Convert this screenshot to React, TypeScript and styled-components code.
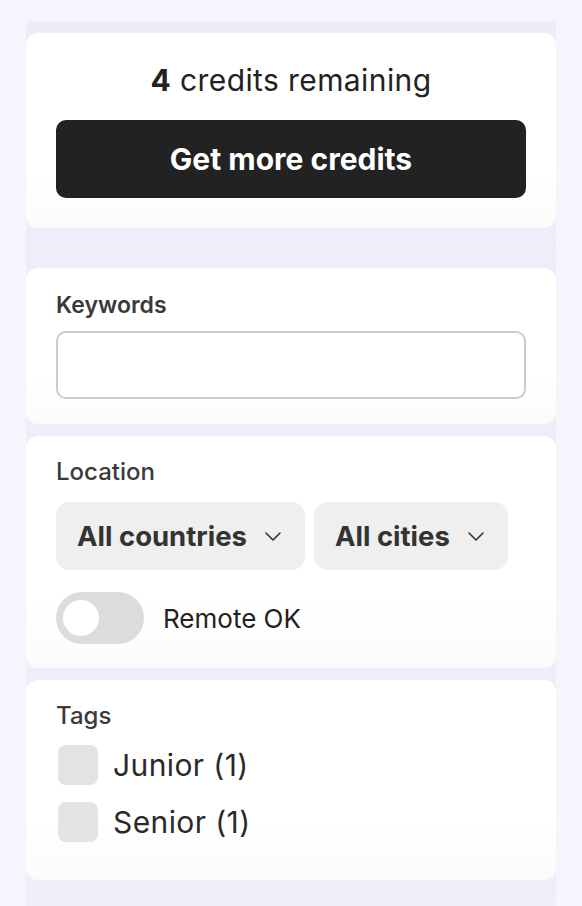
import React from 'react';
import styled, { createGlobalStyle } from 'styled-components';

const GlobalStyle = createGlobalStyle`
  html, body {
    margin: 0;
    padding: 0;
    background: #f5f5fe;
  }
  body {
    font-family: Inter, "Noto Sans", sans-serif;
    color: #222;
  }
`;

const Page = styled.div`
  width: 582px;
  height: 906px;
  padding-top: 21px;
  box-sizing: border-box;
  overflow: hidden;
`;

const Column = styled.div`
  margin: 0 26px;
  padding-top: 12px;
  min-height: 900px;
  background: linear-gradient(180deg, #ededf7 0%, #efeff9 100%);
  display: flex;
  flex-direction: column;
`;

const Card = styled.section<{ $gap?: number; $top?: number; $bottom?: number }>`
  background: linear-gradient(180deg, #ffffff 70%, #fbfbfb 100%);
  border-radius: 12px;
  padding: ${p => p.$top ?? 22}px 30px ${p => p.$bottom ?? 24}px;
  box-sizing: border-box;
  margin-bottom: ${p => p.$gap ?? 12}px;
  display: flex;
  flex-direction: column;
`;

const Credits = styled.div`
  text-align: center;
  font-size: 30px;
  letter-spacing: 0.4px;
  line-height: 34px;
  color: #222;
  margin-bottom: 23px;
  b {
    font-weight: 700;
  }
`;

const PrimaryButton = styled.button`
  height: 78px;
  border: none;
  border-radius: 10px;
  background: #222222;
  color: #fff;
  font-family: Inter, sans-serif;
  font-size: 30px;
  font-weight: 700;
  cursor: pointer;
`;

const Label = styled.div<{ $weight?: number; $space?: number }>`
  font-size: ${p => (p.$weight === 600 ? 23 : 24)}px;
  line-height: 28px;
  font-weight: ${p => p.$weight ?? 500};
  color: #3a3a3a;
  margin-bottom: ${p => p.$space ?? 12}px;
`;

const TextInput = styled.input`
  height: 68px;
  border: 2px solid #cccccc;
  border-radius: 10px;
  box-sizing: border-box;
  font-size: 22px;
  padding: 0 14px;
  outline: none;
`;

const SelectRow = styled.div`
  display: flex;
  gap: 9px;
  margin-bottom: 22px;
`;

const Select = styled.div`
  height: 68px;
  display: flex;
  align-items: center;
  gap: 18px;
  padding: 0 24px 0 21px;
  border-radius: 14px;
  background: #efefef;
  font-size: 27.5px;
  font-weight: 700;
  color: #333;
`;

const ToggleRow = styled.div`
  display: flex;
  align-items: center;
  gap: 19px;
  font-size: 26px;
  color: #222;
`;

const Toggle = styled.div`
  width: 88px;
  height: 52px;
  border-radius: 26px;
  background: #dcdcdc;
  display: flex;
  align-items: center;
  padding-left: 7px;
  box-sizing: border-box;
`;

const Knob = styled.div`
  width: 36px;
  height: 36px;
  border-radius: 50%;
  background: #fff;
`;

const CheckList = styled.div`
  display: flex;
  flex-direction: column;
  gap: 17px;
  margin-bottom: 14px;
`;

const CheckRow = styled.label`
  display: flex;
  align-items: center;
  gap: 15px;
  font-size: 30px;
  letter-spacing: 0.4px;
  color: #2a2a2a;
  padding-left: 2px;
`;

const Box = styled.span`
  width: 40px;
  height: 40px;
  border-radius: 8px;
  background: #e3e3e3;
`;

const Chevron = () => (
  <svg width="16" height="9" viewBox="0 0 16 9" fill="none">
    <path d="M1 1l7 7 7-7" stroke="#333" strokeWidth="1.6" strokeLinecap="round" strokeLinejoin="round" />
  </svg>
);

export default function App() {
  return (
    <Page>
      <GlobalStyle />
      <Column>
        <Card $gap={40} $top={30} $bottom={30}>
          <Credits>
            <b>4</b> credits remaining
          </Credits>
          <PrimaryButton>Get more credits</PrimaryButton>
        </Card>

        <Card $top={23} $bottom={25}>
          <Label $weight={600}>Keywords</Label>
          <TextInput />
        </Card>

        <Card>
          <Label $space={16}>Location</Label>
          <SelectRow>
            <Select>
              All countries <Chevron />
            </Select>
            <Select>
              All cities <Chevron />
            </Select>
          </SelectRow>
          <ToggleRow>
            <Toggle>
              <Knob />
            </Toggle>
            Remote OK
          </ToggleRow>
        </Card>

        <Card>
          <Label $space={15}>Tags</Label>
          <CheckList>
            <CheckRow>
              <Box /> Junior (1)
            </CheckRow>
            <CheckRow>
              <Box /> Senior (1)
            </CheckRow>
          </CheckList>
        </Card>
      </Column>
    </Page>
  );
}
